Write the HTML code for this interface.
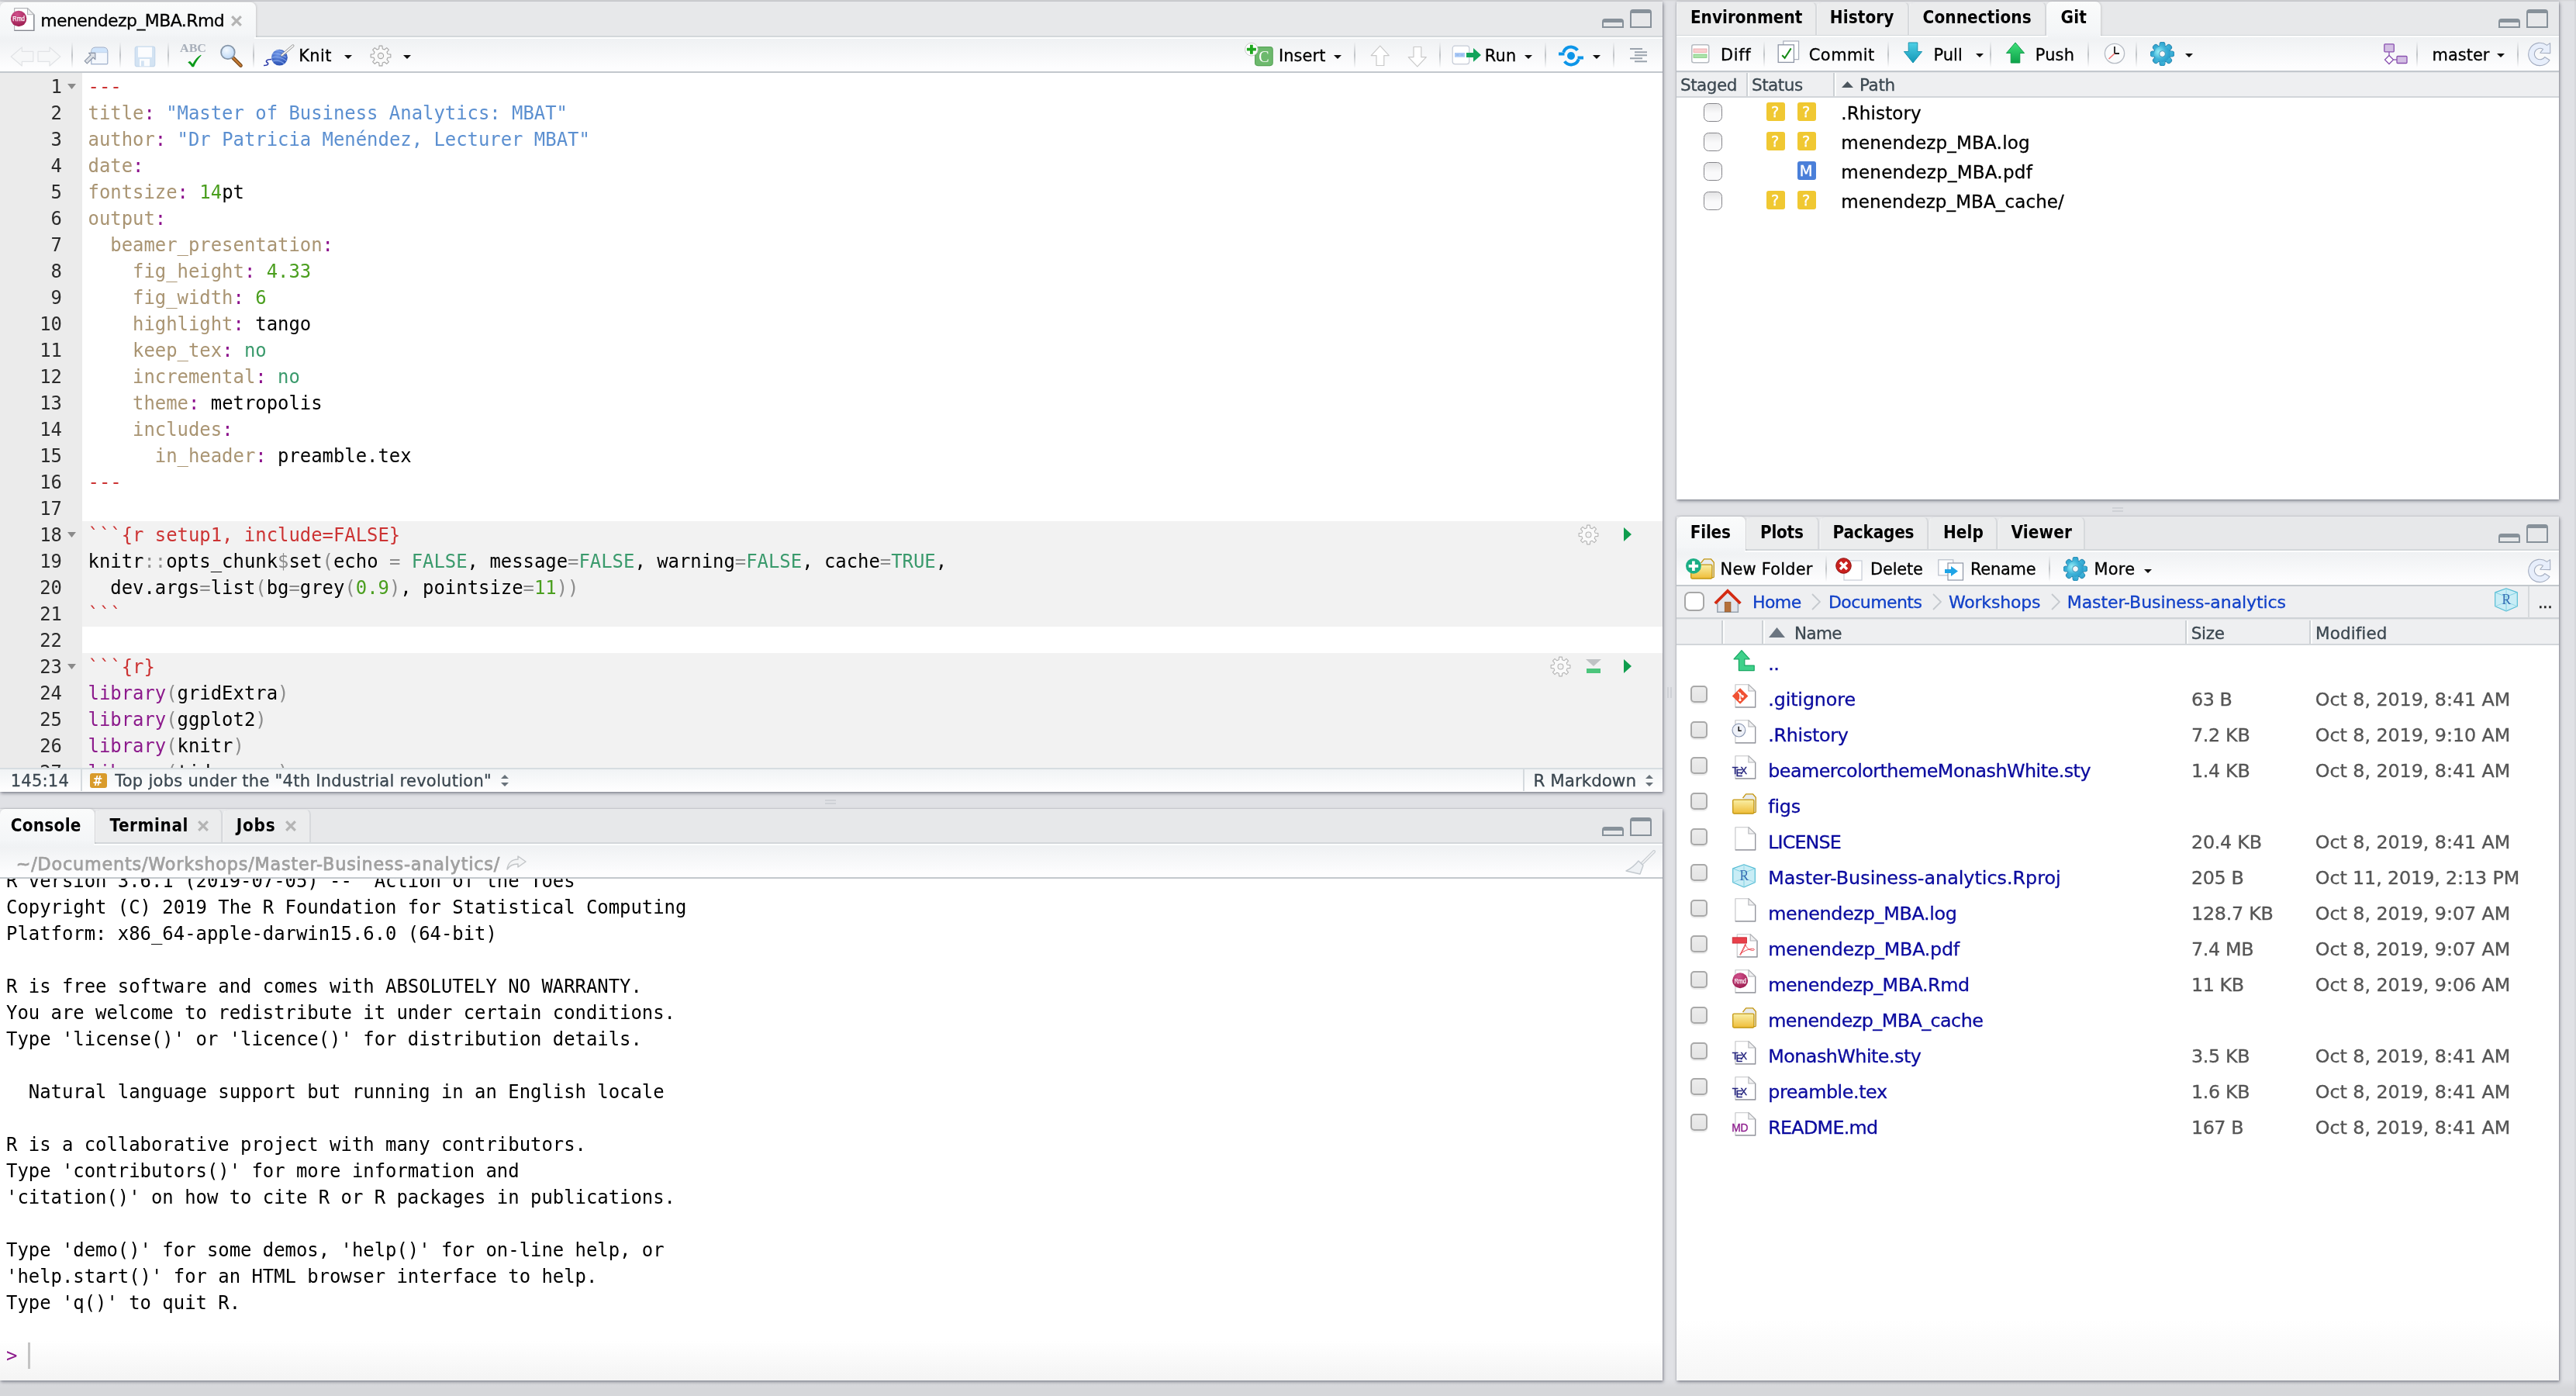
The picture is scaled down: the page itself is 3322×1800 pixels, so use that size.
<!DOCTYPE html>
<html lang="en"><head><meta charset="utf-8"><title>RStudio</title>
<style>
html,body{margin:0;padding:0}
body{width:3322px;height:1800px;overflow:hidden;background:linear-gradient(#e0e1e5 0,#e0e1e5 1778px,#d6d7da 1790px);position:relative;font-family:"DejaVu Sans","Liberation Sans",sans-serif;font-size:22.5px;color:#000}
div,span.t,svg{position:absolute;box-sizing:border-box}
span.t{white-space:pre;line-height:30px;-webkit-text-stroke:.3px}
span.b{font-family:"DejaVu Sans Condensed","DejaVu Sans","Liberation Sans",sans-serif;font-weight:bold;-webkit-text-stroke:0}
span.m{font-family:"DejaVu Sans Mono","Liberation Mono",monospace}
.mono{font-family:"DejaVu Sans Mono","Liberation Mono",monospace;font-size:23.9px;line-height:34px;white-space:pre}
.pane{background:#fff;box-shadow:1px 2px 4px 0 rgba(45,50,65,.5),0 0 2px rgba(45,50,65,.25)}
.tabbar{background:#e7e8ea;border-bottom:2px solid #d3d7da}
.tab{background:#ebeced;border-right:2px solid #d7d9dc;border-left:1px solid #f1f2f3;border-top:1px solid #e2e3e6;border-radius:7px 7px 0 0}
.tab.on{background:linear-gradient(#fafbfb,#f3f5f7);border:0;box-shadow:1px 0 3px rgba(0,0,0,.13)}
.tbar{background:linear-gradient(#eff1f3,#fdfdfe 88%);border-top:2px solid #fcfdfd;border-bottom:2px solid #c3c8cd}
.sep{width:2px;background:linear-gradient(rgba(150,155,160,0),rgba(150,155,160,.55) 50%,rgba(150,155,160,0))}
.hdr{background:#eeeff1;border-bottom:2px solid #d2d6da;border-top:1px solid #e4e6e8}
.colsep{width:4px;background:linear-gradient(90deg,#cdd1d5 0,#cdd1d5 45%,#fbfcfc 55%)}
.cb{border:1.4px solid #86868b;border-radius:6.500px;background:linear-gradient(#e4e4e5,#fafafb 55%)}
.cb2{border:2px solid #a9a9a9;border-radius:5px;background:linear-gradient(#ececec,#e4e4e4);box-shadow:0 2px 1px rgba(0,0,0,.08)}
.gut{background:#ebebeb}
.chunk{background:#f2f2f2}
.ln{color:#2b2b2b;text-align:right}
.r{color:#cc3333}.k{color:#a99472}.p{color:#8b0f8b}.s{color:#5b8fd0}.n{color:#4a9e1e}.c{color:#3a9a6c}.g{color:#8c8c8c}.kw{color:#8c1a8c}
.st{background:#efc135;border-radius:3px;color:#fff}

</style></head><body>
<div id="app" style="left:0;top:0;width:3322px;height:1800px;will-change:transform">
<div style="left:0px;top:0px;width:3322px;height:2px;background:linear-gradient(#d2d3d6,#dedfe2)"></div>
<div style="left:3319px;top:0px;width:3px;height:1800px;background:linear-gradient(90deg,rgba(0,0,0,0),rgba(0,0,0,.05))"></div>
<div class="pane" style="left:0;top:2px;width:2144px;height:1019px"></div>
<div class="tabbar" style="left:0;top:2px;width:2144px;height:46px"></div>
<div class="tab on" style="left:0;top:3px;width:330px;height:46px"></div>
<div class="tbar" style="left:0;top:48px;width:2144px;height:46px"></div>
<div style="left:0px;top:44px;width:328px;height:8px;background:linear-gradient(#f3f5f7,#f0f2f4)"></div>
<div style="left:0px;top:94px;width:106px;height:896px;background:#ebebeb"></div>
<div style="left:106px;top:672px;width:2038px;height:136px;background:#f2f2f2"></div>
<div style="left:106px;top:842px;width:2038px;height:148px;background:#f2f2f2"></div>
<div style="left:0;top:990px;width:2144px;height:31px;background:linear-gradient(#f1f3f5,#fff);border-top:2px solid #d6dde1"></div>
<div class="pane" style="left:0;top:1043px;width:2144px;height:737px"></div>
<div class="tabbar" style="left:0;top:1043px;width:2144px;height:45px"></div>
<div class="tab on" style="left:0;top:1043px;width:122px;height:46px"></div>
<div class="tab" style="left:123px;top:1043px;width:164px;height:43px"></div>
<div class="tab" style="left:288px;top:1043px;width:113px;height:43px"></div>
<div class="tbar" style="left:0;top:1088px;width:2144px;height:45px"></div>
<div style="left:0px;top:1084px;width:121px;height:8px;background:linear-gradient(#f3f5f7,#f0f2f4)"></div>
<div class="pane" style="left:2162px;top:2px;width:1138px;height:642px"></div>
<div class="tabbar" style="left:2162px;top:2px;width:1138px;height:45px"></div>
<div class="tab" style="left:2162px;top:2px;width:181px;height:43px"></div>
<div class="tab" style="left:2343px;top:2px;width:119px;height:43px"></div>
<div class="tab" style="left:2462px;top:2px;width:177px;height:43px"></div>
<div class="tab on" style="left:2639px;top:2px;width:70px;height:46px"></div>
<div class="tbar" style="left:2162px;top:46px;width:1138px;height:46.500px"></div>
<div style="left:2641px;top:43px;width:67px;height:8px;background:linear-gradient(#f3f5f7,#f0f2f4)"></div>
<div class="hdr" style="left:2162px;top:92.500px;width:1138px;height:33.500px"></div>
<div class="pane" style="left:2162px;top:666px;width:1138px;height:1114px;background:linear-gradient(#fff 93%,#f6f6f6)"></div>
<div class="tabbar" style="left:2162px;top:666px;width:1138px;height:44px"></div>
<div class="tab on" style="left:2162px;top:666px;width:89px;height:46px"></div>
<div class="tab" style="left:2252px;top:666px;width:94px;height:42px"></div>
<div class="tab" style="left:2347px;top:666px;width:140px;height:42px"></div>
<div class="tab" style="left:2488px;top:666px;width:88px;height:42px"></div>
<div class="tab" style="left:2577px;top:666px;width:112px;height:42px"></div>
<div class="tbar" style="left:2162px;top:710px;width:1138px;height:46px"></div>
<div style="left:2162px;top:706px;width:88px;height:8px;background:linear-gradient(#f3f5f7,#f0f2f4)"></div>
<div style="left:2162px;top:756px;width:1138px;height:42px;background:#eeeff1;border-bottom:2px solid #cfd3d7"></div>
<div class="hdr" style="left:2162px;top:798px;width:1138px;height:34px"></div>
<span class="t" style="left:52.2px;top:12px;font-size:22px;letter-spacing:-0.577px;">menendezp_MBA.Rmd</span>
<svg style="left:298px;top:19.5px" width="14" height="14" viewBox="0 0 14 14"><path d="M1.200 1.200L12.800 12.800M12.800 1.200L1.200 12.800" stroke="#b4b4b4" stroke-width="3.200"/></svg>
<svg style="left:12px;top:8px" width="34" height="34" viewBox="0 0 34 34"><path d="M6.600 2.600H23.500L31.800 10.800V31.400H6.600Z" fill="#fff" stroke="#b5b6ba" stroke-width="1.200" stroke-linejoin="round"/><path d="M31.800 10.800V31.400H6.600" fill="none" stroke="#84878f" stroke-width="1.300"/><path d="M23.500 2.600V10.800H31.800Z" fill="#f1f1f2" stroke="#b1b3b7" stroke-width="1.100" stroke-linejoin="round"/><circle cx="12.100" cy="16" r="10.200" fill="url(#grm)"/><text x="4.300" y="19.300" font-family="Liberation Sans,sans-serif" font-size="9.500" fill="#fff" stroke="#fff" stroke-width=".25" textLength="15.600" lengthAdjust="spacingAndGlyphs">Rmd</text></svg>
<div style="left:2066px;top:24.4px;width:28px;height:11.6px;border:2px solid #87919a;border-top-width:5.4px;border-radius:4px 4px 0 0"></div>
<div style="left:2102px;top:12px;width:28px;height:24px;border:2px solid #87919a;border-top-width:5.8px;border-radius:4px 4px 0 0"></div>
<div class="sep" style="left:92px;top:54px;height:34px"></div>
<div class="sep" style="left:154px;top:54px;height:34px"></div>
<div class="sep" style="left:216px;top:54px;height:34px"></div>
<div class="sep" style="left:326px;top:54px;height:34px"></div>
<div class="sep" style="left:1746px;top:54px;height:34px"></div>
<div class="sep" style="left:1856px;top:54px;height:34px"></div>
<div class="sep" style="left:1992px;top:54px;height:34px"></div>
<div class="sep" style="left:2080px;top:54px;height:34px"></div>
<span class="t" style="left:385.3px;top:57px;font-size:20.9px;letter-spacing:0.366px;">Knit</span>
<span class="t" style="left:1649.0px;top:57px;font-size:20.9px;letter-spacing:0.08px;">Insert</span>
<span class="t" style="left:1914.8px;top:57px;font-size:20.9px;letter-spacing:0.146px;">Run</span>
<svg style="left:444px;top:71px" width="10" height="5" viewBox="0 0 10 5"><path d="M0 0H10L5.0 5Z" fill="#111"/></svg>
<svg style="left:520px;top:71px" width="10" height="5" viewBox="0 0 10 5"><path d="M0 0H10L5.0 5Z" fill="#111"/></svg>
<svg style="left:1720px;top:71px" width="10" height="5" viewBox="0 0 10 5"><path d="M0 0H10L5.0 5Z" fill="#111"/></svg>
<svg style="left:1966px;top:71px" width="10" height="5" viewBox="0 0 10 5"><path d="M0 0H10L5.0 5Z" fill="#111"/></svg>
<svg style="left:2054px;top:71px" width="10" height="5" viewBox="0 0 10 5"><path d="M0 0H10L5.0 5Z" fill="#111"/></svg>
<div style="left:0;top:95px;width:2144px;height:895px;overflow:hidden">
<div class="mono ln" style="left:0;top:0px;width:80px;height:34px">1</div>
<div class="mono" style="left:113.500px;top:0px;height:34px"><span class="r">---</span></div>
<div class="mono ln" style="left:0;top:34px;width:80px;height:34px">2</div>
<div class="mono" style="left:113.500px;top:34px;height:34px"><span class="k">title</span><span class="p">:</span> <span class="s">"Master of Business Analytics: MBAT"</span></div>
<div class="mono ln" style="left:0;top:68px;width:80px;height:34px">3</div>
<div class="mono" style="left:113.500px;top:68px;height:34px"><span class="k">author</span><span class="p">:</span> <span class="s">"Dr Patricia Menéndez, Lecturer MBAT"</span></div>
<div class="mono ln" style="left:0;top:102px;width:80px;height:34px">4</div>
<div class="mono" style="left:113.500px;top:102px;height:34px"><span class="k">date</span><span class="p">:</span></div>
<div class="mono ln" style="left:0;top:136px;width:80px;height:34px">5</div>
<div class="mono" style="left:113.500px;top:136px;height:34px"><span class="k">fontsize</span><span class="p">:</span> <span class="n">14</span>pt</div>
<div class="mono ln" style="left:0;top:170px;width:80px;height:34px">6</div>
<div class="mono" style="left:113.500px;top:170px;height:34px"><span class="k">output</span><span class="p">:</span></div>
<div class="mono ln" style="left:0;top:204px;width:80px;height:34px">7</div>
<div class="mono" style="left:113.500px;top:204px;height:34px">  <span class="k">beamer_presentation</span><span class="p">:</span></div>
<div class="mono ln" style="left:0;top:238px;width:80px;height:34px">8</div>
<div class="mono" style="left:113.500px;top:238px;height:34px">    <span class="k">fig_height</span><span class="p">:</span> <span class="n">4.33</span></div>
<div class="mono ln" style="left:0;top:272px;width:80px;height:34px">9</div>
<div class="mono" style="left:113.500px;top:272px;height:34px">    <span class="k">fig_width</span><span class="p">:</span> <span class="n">6</span></div>
<div class="mono ln" style="left:0;top:306px;width:80px;height:34px">10</div>
<div class="mono" style="left:113.500px;top:306px;height:34px">    <span class="k">highlight</span><span class="p">:</span> tango</div>
<div class="mono ln" style="left:0;top:340px;width:80px;height:34px">11</div>
<div class="mono" style="left:113.500px;top:340px;height:34px">    <span class="k">keep_tex</span><span class="p">:</span> <span class="c">no</span></div>
<div class="mono ln" style="left:0;top:374px;width:80px;height:34px">12</div>
<div class="mono" style="left:113.500px;top:374px;height:34px">    <span class="k">incremental</span><span class="p">:</span> <span class="c">no</span></div>
<div class="mono ln" style="left:0;top:408px;width:80px;height:34px">13</div>
<div class="mono" style="left:113.500px;top:408px;height:34px">    <span class="k">theme</span><span class="p">:</span> metropolis</div>
<div class="mono ln" style="left:0;top:442px;width:80px;height:34px">14</div>
<div class="mono" style="left:113.500px;top:442px;height:34px">    <span class="k">includes</span><span class="p">:</span></div>
<div class="mono ln" style="left:0;top:476px;width:80px;height:34px">15</div>
<div class="mono" style="left:113.500px;top:476px;height:34px">      <span class="k">in_header</span><span class="p">:</span> preamble.tex</div>
<div class="mono ln" style="left:0;top:510px;width:80px;height:34px">16</div>
<div class="mono" style="left:113.500px;top:510px;height:34px"><span class="r">---</span></div>
<div class="mono ln" style="left:0;top:544px;width:80px;height:34px">17</div>
<div class="mono" style="left:113.500px;top:544px;height:34px"></div>
<div class="mono ln" style="left:0;top:578px;width:80px;height:34px">18</div>
<div class="mono" style="left:113.500px;top:578px;height:34px"><span class="r">```{r setup1, include=FALSE}</span></div>
<div class="mono ln" style="left:0;top:612px;width:80px;height:34px">19</div>
<div class="mono" style="left:113.500px;top:612px;height:34px">knitr<span class="g">::</span>opts_chunk<span class="g">$</span>set<span class="g">(</span>echo <span class="g">=</span> <span class="c">FALSE</span>, message<span class="g">=</span><span class="c">FALSE</span>, warning<span class="g">=</span><span class="c">FALSE</span>, cache<span class="g">=</span><span class="c">TRUE</span>,</div>
<div class="mono ln" style="left:0;top:646px;width:80px;height:34px">20</div>
<div class="mono" style="left:113.500px;top:646px;height:34px">  dev.args<span class="g">=</span>list<span class="g">(</span>bg<span class="g">=</span>grey<span class="g">(</span><span class="n">0.9</span><span class="g">)</span>, pointsize<span class="g">=</span><span class="n">11</span><span class="g">))</span></div>
<div class="mono ln" style="left:0;top:680px;width:80px;height:34px">21</div>
<div class="mono" style="left:113.500px;top:680px;height:34px"><span class="r">```</span></div>
<div class="mono ln" style="left:0;top:714px;width:80px;height:34px">22</div>
<div class="mono" style="left:113.500px;top:714px;height:34px"></div>
<div class="mono ln" style="left:0;top:748px;width:80px;height:34px">23</div>
<div class="mono" style="left:113.500px;top:748px;height:34px"><span class="r">```{r}</span></div>
<div class="mono ln" style="left:0;top:782px;width:80px;height:34px">24</div>
<div class="mono" style="left:113.500px;top:782px;height:34px"><span class="kw">library</span><span class="g">(</span>gridExtra<span class="g">)</span></div>
<div class="mono ln" style="left:0;top:816px;width:80px;height:34px">25</div>
<div class="mono" style="left:113.500px;top:816px;height:34px"><span class="kw">library</span><span class="g">(</span>ggplot2<span class="g">)</span></div>
<div class="mono ln" style="left:0;top:850px;width:80px;height:34px">26</div>
<div class="mono" style="left:113.500px;top:850px;height:34px"><span class="kw">library</span><span class="g">(</span>knitr<span class="g">)</span></div>
<div class="mono ln" style="left:0;top:884px;width:80px;height:34px">27</div>
<div class="mono" style="left:113.500px;top:884px;height:34px"><span class="kw">library</span><span class="g">(</span>tidyverse<span class="g">)</span></div>
<svg style="left:87px;top:13px" width="11" height="7" viewBox="0 0 11 7"><path d="M0 0H11L5.5 7Z" fill="#8a8a8a"/></svg>
<svg style="left:87px;top:591px" width="11" height="7" viewBox="0 0 11 7"><path d="M0 0H11L5.5 7Z" fill="#8a8a8a"/></svg>
<svg style="left:87px;top:761px" width="11" height="7" viewBox="0 0 11 7"><path d="M0 0H11L5.5 7Z" fill="#8a8a8a"/></svg>
</div>
<svg style="left:2035.1px;top:675.5px" width="27" height="27" viewBox="0 0 28 28"><path d="M11.75 4.98L12.08 1.14L15.92 1.14L16.25 4.98L18.79 6.03L21.73 3.55L24.45 6.27L21.97 9.21L23.02 11.75L26.86 12.08L26.86 15.92L23.02 16.25L21.97 18.79L24.45 21.73L21.73 24.45L18.79 21.97L16.25 23.02L15.92 26.86L12.08 26.86L11.75 23.02L9.21 21.97L6.27 24.45L3.55 21.73L6.03 18.79L4.98 16.25L1.14 15.92L1.14 12.08L4.98 11.75L6.03 9.21L3.55 6.27L6.27 3.55L9.21 6.03Z" fill="#fafafa" stroke="#b3b3b3" stroke-width="1.100" stroke-linejoin="round"/><circle cx="14" cy="14" r="3.600" fill="#f4f4f4" stroke="#b3b3b3" stroke-width="1.100"/></svg>
<svg style="left:2094px;top:680px" width="10" height="18" viewBox="0 0 10 18"><path d="M0 0L10 9L0 18Z" fill="#0f9d4d"/></svg>
<svg style="left:1999.2px;top:845.5px" width="27" height="27" viewBox="0 0 28 28"><path d="M11.75 4.98L12.08 1.14L15.92 1.14L16.25 4.98L18.79 6.03L21.73 3.55L24.45 6.27L21.97 9.21L23.02 11.75L26.86 12.08L26.86 15.92L23.02 16.25L21.97 18.79L24.45 21.73L21.73 24.45L18.79 21.97L16.25 23.02L15.92 26.86L12.08 26.86L11.75 23.02L9.21 21.97L6.27 24.45L3.55 21.73L6.03 18.79L4.98 16.25L1.14 15.92L1.14 12.08L4.98 11.75L6.03 9.21L3.55 6.27L6.27 3.55L9.21 6.03Z" fill="#fafafa" stroke="#b3b3b3" stroke-width="1.100" stroke-linejoin="round"/><circle cx="14" cy="14" r="3.600" fill="#f4f4f4" stroke="#b3b3b3" stroke-width="1.100"/></svg>
<svg style="left:2094px;top:850px" width="10" height="18" viewBox="0 0 10 18"><path d="M0 0L10 9L0 18Z" fill="#0f9d4d"/></svg>
<svg style="left:2045px;top:850px" width="20" height="18" viewBox="0 0 20 18"><path d="M0 0H20L10 9Z" fill="#bfc2c4"/><rect x="1" y="12" width="18" height="6" fill="#4cc57c"/></svg>
<span class="t" style="left:13.7px;top:992px;font-size:21px;color:#3b4750;letter-spacing:0.235px;">145:14</span>
<div style="left:104px;top:992px;width:2px;height:28px;background:#d5dade"></div>
<div style="left:116px;top:997px;width:22px;height:19px;background:#d99b2b;border-radius:3px"></div>
<span class="t b" style="left:119.5px;top:992px;font-size:17px;color:#fff;letter-spacing:-0.612px;">#</span>
<span class="t" style="left:148.2px;top:992px;font-size:21px;color:#3b4750;letter-spacing:0.281px;">Top jobs under the "4th Industrial revolution"</span>
<svg style="left:646px;top:999px" width="10" height="15" viewBox="0 0 10 15"><path d="M0 5L5 0L10 5ZM0 10L5 15L10 10Z" fill="#69737b"/></svg>
<div style="left:1964px;top:992px;width:2px;height:28px;background:#d5dade"></div>
<span class="t" style="left:1977.6px;top:992px;font-size:21.5px;color:#3b4750;letter-spacing:-0.041px;">R Markdown</span>
<svg style="left:2122px;top:999px" width="10" height="15" viewBox="0 0 10 15"><path d="M0 5L5 0L10 5ZM0 10L5 15L10 10Z" fill="#69737b"/></svg>
<svg style="left:13px;top:60px" width="66" height="26" viewBox="0 0 66 26"><path d="M1.200 13L15.300 1V6.300H29.800V19.400H15.300V25Z" fill="#f6f7f8" stroke="#e1e3e6" stroke-width="1.2" stroke-linejoin="round"/><path d="M64.800 13L51 1V6.300H36V19.400H51V25Z" fill="#f6f7f8" stroke="#e1e3e6" stroke-width="1.2" stroke-linejoin="round"/></svg>
<svg style="left:108px;top:60px" width="32" height="24" viewBox="0 0 32 24"><path d="M9.800 22.600V6.500C9.800 3.500 12 1.200 15 1.200H25.500C28.500 1.200 30.800 3.500 30.800 6.500V21.500Q30.800 22.600 29.700 22.600Z" fill="#f5f8fd" stroke="#9fb0cb" stroke-width="1.2"/><path d="M10.400 7.400V6.500C10.400 3.800 12.300 1.800 15 1.800H25.500C28.200 1.800 30.200 3.800 30.200 6.500V7.400Z" fill="#cfe4fb"/><path d="M10.400 7.700H30.200" stroke="#b7cbe6" stroke-width=".8"/><path d="M6.500 8.400H14.800V16.700L12.100 14L4.300 21.800L1.200 18.700L9 10.900Z" fill="#dde1e7" stroke="#8a94a6" stroke-width="1.200" stroke-linejoin="round"/></svg>
<svg style="left:173px;top:59px" width="28" height="28" viewBox="0 0 28 28"><rect x="1.200" y="1.200" width="25.500" height="25.500" rx="2.500" fill="#d3e3f3" stroke="#c5d8ec" stroke-width="1.2"/><rect x="5" y="1.800" width="18" height="13" fill="#fbfcfe"/><rect x="7" y="17" width="13" height="9.400" fill="#fbfcfe"/><rect x="9" y="19.400" width="3.800" height="7" fill="#d3e3f3"/></svg>
<svg style="left:230px;top:54px" width="40" height="34" viewBox="0 0 40 34"><text x="2" y="13.400" font-family="Liberation Serif,serif" font-weight="bold" font-size="14.800" fill="#a8afba" textLength="34" lengthAdjust="spacingAndGlyphs">ABC</text><path d="M12.200 26.200L15 24.800L18.500 28.500C21 23.500 24.500 19.500 29 16.800L29.600 17.600C25.500 21.500 22.500 26.500 20 32.300H17.600C16.200 30 14.500 28 12.200 26.200Z" fill="#0b9a1a"/></svg>
<svg style="left:282px;top:56px" width="32" height="32" viewBox="0 0 32 32"><defs><radialGradient id="gm" cx=".4" cy=".35" r=".7"><stop offset="0" stop-color="#f4f9ff"/><stop offset="1" stop-color="#b9d6f6"/></radialGradient></defs><path d="M18.500 18.500L28.500 28.500" stroke="#7a4a1c" stroke-width="4.600" stroke-linecap="round"/><path d="M18.500 18.500L28.500 28.500" stroke="#c77b35" stroke-width="2.400" stroke-linecap="round"/><circle cx="11.900" cy="11.400" r="8.800" fill="url(#gm)" stroke="#8595a8" stroke-width="1.800"/></svg>
<svg style="left:338px;top:56px" width="42" height="32" viewBox="0 0 42 32"><defs><radialGradient id="gk" cx=".4" cy=".3" r=".8"><stop offset="0" stop-color="#6f95e6"/><stop offset="1" stop-color="#2148ad"/></radialGradient></defs><path d="M2 28.500C8 28.500 9 26 6.500 24.500C4 23 5.500 20.500 12 20.500" fill="none" stroke="#2b3aa8" stroke-width="1.500"/><circle cx="22.400" cy="18.200" r="10.400" fill="url(#gk)"/><path d="M13 14C17 12 24 13 31 18M12.300 18.500C18 16 26 18 32 23M13.500 23C19 21 25 23 29 26.500M17 9.500C21 9 27 11 31 14" fill="none" stroke="#8fb0f0" stroke-width="1.100" opacity=".8"/><path d="M39.800 3L25.500 15.200" stroke="#8b8b8b" stroke-width="3.200" stroke-linecap="round"/><path d="M39.800 3L25.500 15.200" stroke="#fafafa" stroke-width="1.700" stroke-linecap="round"/></svg>
<svg style="left:476.500px;top:57.500px" width="28" height="28" viewBox="0 0 28 28"><path d="M11.75 4.98L12.08 1.14L15.92 1.14L16.25 4.98L18.79 6.03L21.73 3.55L24.45 6.27L21.97 9.21L23.02 11.75L26.86 12.08L26.86 15.92L23.02 16.25L21.97 18.79L24.45 21.73L21.73 24.45L18.79 21.97L16.25 23.02L15.92 26.86L12.08 26.86L11.75 23.02L9.21 21.97L6.27 24.45L3.55 21.73L6.03 18.79L4.98 16.25L1.14 15.92L1.14 12.08L4.98 11.75L6.03 9.21L3.55 6.27L6.27 3.55L9.21 6.03Z" fill="#fafafa" stroke="#a6a6a6" stroke-width="1.100" stroke-linejoin="round"/><circle cx="14" cy="14" r="3.600" fill="#f4f4f4" stroke="#a6a6a6" stroke-width="1.100"/></svg>
<svg style="left:1604px;top:54px" width="38" height="32" viewBox="0 0 38 32"><rect x="14.600" y="6.600" width="22.600" height="24" rx="3.500" fill="#6db96d" stroke="#5aa65a" stroke-width="1.200"/><text x="26" y="25.500" text-anchor="middle" font-family="Liberation Serif,serif" font-size="20" fill="#fff">C</text><circle cx="9.900" cy="9.700" r="8.300" fill="#fff" stroke="#c9c9c9" stroke-width="1"/><path d="M9.900 3.700V15.700M3.900 9.700H15.900" stroke="#1fa71f" stroke-width="3.800"/></svg>
<svg style="left:1767px;top:58px" width="26" height="28" viewBox="0 0 26 28"><path d="M12.800 1.200L24.300 13.600H17.800V26.500H8V13.600H1.200Z" fill="#fff" stroke="#c9c9c9" stroke-width="1.200" stroke-linejoin="round"/></svg>
<svg style="left:1815px;top:59px" width="26" height="28" viewBox="0 0 26 28"><path d="M12.800 26.800L24.300 14.600H17.800V1.500H8V14.600H1.200Z" fill="#fff" stroke="#c9c9c9" stroke-width="1.200" stroke-linejoin="round"/></svg>
<svg style="left:1872px;top:58px" width="40" height="26" viewBox="0 0 40 26"><rect x="1.200" y="1.200" width="21.500" height="23.400" rx="3" fill="#fff" stroke="#c5cbd6" stroke-width="1.200"/><rect x="4" y="10" width="13" height="5.700" fill="#a9c8f5"/><path d="M6 12.800H9.500M11.500 12.800H15" stroke="#8fb2e6" stroke-width="1.200"/><path d="M19 10H28V4L38 13L28 21.800V16H19Z" fill="#13a45b"/></svg>
<svg style="left:2008px;top:58px" width="36" height="28" viewBox="0 0 36 28"><circle cx="18" cy="14" r="5" fill="#0d95e8"/><path d="M8.200 9.400C10 4.800 14 2.600 18 2.600C21.500 2.600 24.500 4.200 26.300 6.800" fill="none" stroke="#0d95e8" stroke-width="4"/><path d="M27.800 18.600C26 23.200 22 25.400 18 25.400C14.500 25.400 11.500 23.800 9.700 21.200" fill="none" stroke="#0d95e8" stroke-width="4"/><path d="M2 11.500H9.500M26.500 16.500H34" stroke="#0d95e8" stroke-width="4"/></svg>
<svg style="left:2101px;top:61px" width="24" height="20" viewBox="0 0 24 20"><path d="M1 2H17M7 6.300H23M7 10.300H23M1 14.200H17M7 18.200H23" stroke="#9aa3ad" stroke-width="2"/></svg>
<span class="t b" style="left:13.7px;top:1049px;font-size:22.3px;letter-spacing:0.3px;">Console</span>
<span class="t b" style="left:141.6px;top:1049px;font-size:22.3px;letter-spacing:0.587px;">Terminal</span>
<span class="t b" style="left:304.7px;top:1049px;font-size:22.3px;letter-spacing:0.838px;">Jobs</span>
<svg style="left:254.5px;top:1058px" width="14" height="14" viewBox="0 0 14 14"><path d="M1.200 1.200L12.800 12.800M12.800 1.200L1.200 12.800" stroke="#b4b4b4" stroke-width="3.200"/></svg>
<svg style="left:368px;top:1058px" width="14" height="14" viewBox="0 0 14 14"><path d="M1.200 1.200L12.800 12.800M12.800 1.200L1.200 12.800" stroke="#b4b4b4" stroke-width="3.200"/></svg>
<div style="left:2066px;top:1066.4px;width:28px;height:11.6px;border:2px solid #87919a;border-top-width:5.4px;border-radius:4px 4px 0 0"></div>
<div style="left:2102px;top:1054px;width:28px;height:24px;border:2px solid #87919a;border-top-width:5.8px;border-radius:4px 4px 0 0"></div>
<span class="t" style="left:20.7px;top:1099px;font-size:22.3px;color:#a0a0a0;letter-spacing:0.809px;-webkit-text-stroke:.75px">~/Documents/Workshops/Master-Business-analytics/</span>
<svg style="left:653px;top:1103px" width="26" height="20" viewBox="0 0 26 20"><path d="M15 1L25 8L15 15V11C9 11 4 13 1 18C2 10 7 5 15 5Z" fill="#f4f5f6" stroke="#c3c6c9" stroke-width="1.5" stroke-linejoin="round"/></svg>
<svg style="left:2094px;top:1096px" width="42" height="34" viewBox="0 0 42 34"><path d="M39 2L24 17" stroke="#c9ced3" stroke-width="4" stroke-linecap="round"/><path d="M39 2L24 17" stroke="#f6f7f8" stroke-width="1.6" stroke-linecap="round"/><path d="M19 14L25 20L21 31L3 27C9 24 15 19 19 14Z" fill="#eef1f4" stroke="#c3c9cf" stroke-width="1.4" stroke-linejoin="round"/></svg>
<div style="left:0;top:1133px;width:2144px;height:647px;overflow:hidden;background:linear-gradient(#fff 92%,#f4f4f4)">
<div class="mono" style="left:8px;top:-14px;height:34px">R version 3.6.1 (2019-07-05) -- "Action of the Toes"</div>
<div class="mono" style="left:8px;top:20px;height:34px">Copyright (C) 2019 The R Foundation for Statistical Computing</div>
<div class="mono" style="left:8px;top:54px;height:34px">Platform: x86_64-apple-darwin15.6.0 (64-bit)</div>
<div class="mono" style="left:8px;top:88px;height:34px"></div>
<div class="mono" style="left:8px;top:122px;height:34px">R is free software and comes with ABSOLUTELY NO WARRANTY.</div>
<div class="mono" style="left:8px;top:156px;height:34px">You are welcome to redistribute it under certain conditions.</div>
<div class="mono" style="left:8px;top:190px;height:34px">Type 'license()' or 'licence()' for distribution details.</div>
<div class="mono" style="left:8px;top:224px;height:34px"></div>
<div class="mono" style="left:8px;top:258px;height:34px">  Natural language support but running in an English locale</div>
<div class="mono" style="left:8px;top:292px;height:34px"></div>
<div class="mono" style="left:8px;top:326px;height:34px">R is a collaborative project with many contributors.</div>
<div class="mono" style="left:8px;top:360px;height:34px">Type 'contributors()' for more information and</div>
<div class="mono" style="left:8px;top:394px;height:34px">'citation()' on how to cite R or R packages in publications.</div>
<div class="mono" style="left:8px;top:428px;height:34px"></div>
<div class="mono" style="left:8px;top:462px;height:34px">Type 'demo()' for some demos, 'help()' for on-line help, or</div>
<div class="mono" style="left:8px;top:496px;height:34px">'help.start()' for an HTML browser interface to help.</div>
<div class="mono" style="left:8px;top:530px;height:34px">Type 'q()' to quit R.</div>
<div class="mono" style="left:8px;top:564px;height:34px"></div>
<div class="mono" style="left:8px;top:598px;height:34px"><span class="kw">&gt;</span> </div>
<div style="left:36px;top:598px;width:3px;height:34px;background:#c4c4c4"></div>
</div>
<span class="t b" style="left:2179.9px;top:7px;font-size:22.3px;letter-spacing:0.018px;">Environment</span>
<span class="t b" style="left:2359.8px;top:7px;font-size:22.3px;letter-spacing:0.107px;">History</span>
<span class="t b" style="left:2479.6px;top:7px;font-size:22.3px;letter-spacing:0.096px;">Connections</span>
<span class="t b" style="left:2657.5px;top:7px;font-size:22.3px;letter-spacing:0.188px;">Git</span>
<div style="left:3222px;top:24.4px;width:28px;height:11.6px;border:2px solid #87919a;border-top-width:5.4px;border-radius:4px 4px 0 0"></div>
<div style="left:3258px;top:12px;width:28px;height:24px;border:2px solid #87919a;border-top-width:5.8px;border-radius:4px 4px 0 0"></div>
<div class="sep" style="left:2274px;top:53px;height:34px"></div>
<div class="sep" style="left:2434px;top:53px;height:34px"></div>
<div class="sep" style="left:2566px;top:53px;height:34px"></div>
<div class="sep" style="left:2692px;top:53px;height:34px"></div>
<div class="sep" style="left:2754px;top:53px;height:34px"></div>
<div class="sep" style="left:3116px;top:53px;height:34px"></div>
<div class="sep" style="left:3246px;top:53px;height:34px"></div>
<span class="t" style="left:2219.0px;top:56px;font-size:20.9px;letter-spacing:0.676px;">Diff</span>
<span class="t" style="left:2332.8px;top:56px;font-size:20.9px;letter-spacing:0.487px;">Commit</span>
<span class="t" style="left:2493.5px;top:56px;font-size:20.9px;letter-spacing:0.077px;">Pull</span>
<span class="t" style="left:2624.7px;top:56px;font-size:20.9px;letter-spacing:0.223px;">Push</span>
<span class="t" style="left:3136.6px;top:56px;font-size:20.9px;letter-spacing:0.038px;">master</span>
<svg style="left:2548px;top:69px" width="10" height="5" viewBox="0 0 10 5"><path d="M0 0H10L5.0 5Z" fill="#111"/></svg>
<svg style="left:2818px;top:69px" width="10" height="5" viewBox="0 0 10 5"><path d="M0 0H10L5.0 5Z" fill="#111"/></svg>
<svg style="left:3220px;top:69px" width="10" height="5" viewBox="0 0 10 5"><path d="M0 0H10L5.0 5Z" fill="#111"/></svg>
<svg style="left:2181px;top:57px" width="24" height="25" viewBox="0 0 24 25"><rect x=".75" y=".75" width="22" height="23" rx="2.5" fill="#fff" stroke="#b7bcc2" stroke-width="1.5"/><rect x="3" y="6" width="17" height="4.5" fill="#f9cfd0" stroke="#eaa3a5" stroke-width=".8"/><rect x="3" y="13" width="17" height="4.5" fill="#abe2aa" stroke="#7fcb7d" stroke-width=".8"/></svg>
<svg style="left:2292px;top:52px" width="29" height="30" viewBox="0 0 29 30"><rect x="7.800" y="1" width="19.800" height="23.600" fill="#fff" stroke="#a9aebb" stroke-width="1.200"/><rect x="1.200" y="5.800" width="20.200" height="22.600" fill="#fff" stroke="#8f96a6" stroke-width="1.300"/><path d="M6.200 19.200L9.600 22.800L17.700 10.400" fill="none" stroke="#168a16" stroke-width="2"/></svg>
<svg style="left:2454px;top:54px" width="26" height="28" viewBox="0 0 26 29"><defs><linearGradient id="gp" x1="0" y1="0" x2="0" y2="1"><stop offset="0" stop-color="#4fd0e6"/><stop offset="1" stop-color="#1397b6"/></linearGradient></defs><path d="M7 1H19V13H25L13 28L1 13H7Z" fill="url(#gp)" stroke="#1792ae" stroke-width="1"/></svg>
<svg style="left:2586px;top:54px" width="26" height="28" viewBox="0 0 26 29"><defs><linearGradient id="gu" x1="0" y1="0" x2="0" y2="1"><stop offset="0" stop-color="#3fe07a"/><stop offset="1" stop-color="#0da24a"/></linearGradient></defs><path d="M7 28H19V15H25L13 1L1 15H7Z" fill="url(#gu)" stroke="#0f9a48" stroke-width="1"/></svg>
<svg style="left:2713px;top:55px" width="28" height="28" viewBox="0 0 28 28"><circle cx="14" cy="14" r="12.6" fill="#fafbfc" stroke="#b9bec6" stroke-width="1.4"/><path d="M14 5V14H20" fill="none" stroke="#222" stroke-width="1.8"/><path d="M14 14L6.500 21" stroke="#f26d6d" stroke-width="1.5"/></svg>
<svg width="0" height="0" style="left:0;top:0"><defs><radialGradient id="gg" gradientUnits="userSpaceOnUse" cx="11" cy="13" r="16"><stop offset="0" stop-color="#9af0f8"/><stop offset=".55" stop-color="#3fb4d9"/><stop offset="1" stop-color="#2799c8"/></radialGradient></defs></svg>
<svg style="left:2773px;top:53.7px" width="31" height="31" viewBox="0 0 31 31"><g fill="#2b86ad" stroke="#2b86ad" stroke-width="1.500"><rect x="12.300" y=".5" width="6.400" height="11" rx="2.600" transform="rotate(0 15.500 15.500)"/><rect x="12.300" y=".5" width="6.400" height="11" rx="2.600" transform="rotate(45 15.500 15.500)"/><rect x="12.300" y=".5" width="6.400" height="11" rx="2.600" transform="rotate(90 15.500 15.500)"/><rect x="12.300" y=".5" width="6.400" height="11" rx="2.600" transform="rotate(135 15.500 15.500)"/><rect x="12.300" y=".5" width="6.400" height="11" rx="2.600" transform="rotate(180 15.500 15.500)"/><rect x="12.300" y=".5" width="6.400" height="11" rx="2.600" transform="rotate(225 15.500 15.500)"/><rect x="12.300" y=".5" width="6.400" height="11" rx="2.600" transform="rotate(270 15.500 15.500)"/><rect x="12.300" y=".5" width="6.400" height="11" rx="2.600" transform="rotate(315 15.500 15.500)"/><circle cx="15.500" cy="15.500" r="10.400"/></g><g fill="url(#gg)"><rect x="12.300" y=".5" width="6.400" height="11" rx="2.600" transform="rotate(0 15.500 15.500)"/><rect x="12.300" y=".5" width="6.400" height="11" rx="2.600" transform="rotate(45 15.500 15.500)"/><rect x="12.300" y=".5" width="6.400" height="11" rx="2.600" transform="rotate(90 15.500 15.500)"/><rect x="12.300" y=".5" width="6.400" height="11" rx="2.600" transform="rotate(135 15.500 15.500)"/><rect x="12.300" y=".5" width="6.400" height="11" rx="2.600" transform="rotate(180 15.500 15.500)"/><rect x="12.300" y=".5" width="6.400" height="11" rx="2.600" transform="rotate(225 15.500 15.500)"/><rect x="12.300" y=".5" width="6.400" height="11" rx="2.600" transform="rotate(270 15.500 15.500)"/><rect x="12.300" y=".5" width="6.400" height="11" rx="2.600" transform="rotate(315 15.500 15.500)"/><circle cx="15.500" cy="15.500" r="10.400"/></g><circle cx="15.500" cy="15.500" r="3.900" fill="#f6f8fa" stroke="#2b86ad" stroke-width=".9"/></svg>
<svg style="left:3074px;top:56px" width="31" height="28" viewBox="0 0 31 28"><rect x=".8" y=".8" width="12.500" height="10" rx="1" fill="#d3bfe3" stroke="#8a52b0" stroke-width="1.3"/><path d="M7 11V16" stroke="#8a52b0" stroke-width="1.3"/><path d="M7 15.500L12.500 21L7 26.500L1.500 21Z" fill="#fff" stroke="#8a52b0" stroke-width="1.3"/><path d="M12.500 21H17" stroke="#8a52b0" stroke-width="1.3"/><rect x="17" y="16.500" width="13" height="9" rx="1" fill="#d3bfe3" stroke="#8a52b0" stroke-width="1.3"/></svg>
<svg style="left:3260px;top:53.5px" width="31" height="32" viewBox="0 0 31 32"><path d="M24.500 4.400A14.700 14.700 0 1 0 27.970 23.540L21.650 19.590A7.250 7.250 0 1 1 19.500 9.400L15.900 14.200L28.800 14.600L28.600 1.600Z" fill="#e7eefb" stroke="#a4adc0" stroke-width="1.100" stroke-linejoin="round"/></svg>
<span class="t" style="left:2167.0px;top:95px;font-size:21.5px;color:#3b4750;letter-spacing:-0.497px;">Staged</span>
<span class="t" style="left:2259.0px;top:95px;font-size:21.5px;color:#3b4750;letter-spacing:-0.486px;">Status</span>
<span class="t" style="left:2398.0px;top:95px;font-size:21.5px;color:#3b4750;letter-spacing:-0.384px;">Path</span>
<div class="colsep" style="left:2252px;top:94px;height:30px"></div>
<div class="colsep" style="left:2364px;top:94px;height:30px"></div>
<svg style="left:2375px;top:105px" width="15" height="8" viewBox="0 0 15 8"><path d="M0 8L7.500 0L15 8Z" fill="#4c565e"/></svg>
<div class="cb" style="left:2197px;top:133.1px;width:24px;height:24px"></div>
<div style="left:2278px;top:132.3px;width:24px;height:24px;background:#f0c832;border-radius:3px"></div>
<span class="t" style="left:2284.0px;top:130px;font-size:19.5px;color:#fff;letter-spacing:0px;">?</span>
<div style="left:2318px;top:132.3px;width:24px;height:24px;background:#f0c832;border-radius:3px"></div>
<span class="t" style="left:2324.0px;top:130px;font-size:19.5px;color:#fff;letter-spacing:0px;">?</span>
<span class="t" style="left:2374.3px;top:131px;font-size:23px;letter-spacing:0.122px;">.Rhistory</span>
<div class="cb" style="left:2197px;top:171.1px;width:24px;height:24px"></div>
<div style="left:2278px;top:170.3px;width:24px;height:24px;background:#f0c832;border-radius:3px"></div>
<span class="t" style="left:2284.0px;top:168px;font-size:19.5px;color:#fff;letter-spacing:0px;">?</span>
<div style="left:2318px;top:170.3px;width:24px;height:24px;background:#f0c832;border-radius:3px"></div>
<span class="t" style="left:2324.0px;top:168px;font-size:19.5px;color:#fff;letter-spacing:0px;">?</span>
<span class="t" style="left:2374.3px;top:169px;font-size:23px;letter-spacing:0.199px;">menendezp_MBA.log</span>
<div class="cb" style="left:2197px;top:209.1px;width:24px;height:24px"></div>
<div style="left:2318px;top:208.3px;width:24px;height:24px;background:#4a7fd9;border-radius:3px"></div>
<span class="t" style="left:2320.8px;top:206px;font-size:19.5px;color:#fff;letter-spacing:0px;">M</span>
<span class="t" style="left:2374.3px;top:207px;font-size:23px;letter-spacing:0.256px;">menendezp_MBA.pdf</span>
<div class="cb" style="left:2197px;top:247.1px;width:24px;height:24px"></div>
<div style="left:2278px;top:246.3px;width:24px;height:24px;background:#f0c832;border-radius:3px"></div>
<span class="t" style="left:2284.0px;top:244px;font-size:19.5px;color:#fff;letter-spacing:0px;">?</span>
<div style="left:2318px;top:246.3px;width:24px;height:24px;background:#f0c832;border-radius:3px"></div>
<span class="t" style="left:2324.0px;top:244px;font-size:19.5px;color:#fff;letter-spacing:0px;">?</span>
<span class="t" style="left:2374.3px;top:245px;font-size:23px;letter-spacing:0.109px;">menendezp_MBA_cache/</span>
<span class="t b" style="left:2179.8px;top:671px;font-size:22.3px;letter-spacing:-0.22px;">Files</span>
<span class="t b" style="left:2270.0px;top:671px;font-size:22.3px;letter-spacing:-0.258px;">Plots</span>
<span class="t b" style="left:2363.5px;top:671px;font-size:22.3px;letter-spacing:-0.177px;">Packages</span>
<span class="t b" style="left:2506.0px;top:671px;font-size:22.3px;letter-spacing:0.04px;">Help</span>
<span class="t b" style="left:2593.6px;top:671px;font-size:22.3px;letter-spacing:0.124px;">Viewer</span>
<div style="left:3222px;top:688.4px;width:28px;height:11.6px;border:2px solid #87919a;border-top-width:5.4px;border-radius:4px 4px 0 0"></div>
<div style="left:3258px;top:676px;width:28px;height:24px;border:2px solid #87919a;border-top-width:5.8px;border-radius:4px 4px 0 0"></div>
<div class="sep" style="left:2354px;top:716px;height:34px"></div>
<div class="sep" style="left:2642px;top:716px;height:34px"></div>
<span class="t" style="left:2218.6px;top:719px;font-size:20.9px;letter-spacing:0.233px;">New Folder</span>
<span class="t" style="left:2412.0px;top:719px;font-size:20.9px;letter-spacing:-0.14px;">Delete</span>
<span class="t" style="left:2540.9px;top:719px;font-size:20.9px;letter-spacing:-0.198px;">Rename</span>
<span class="t" style="left:2700.5px;top:719px;font-size:20.9px;letter-spacing:0.276px;">More</span>
<svg style="left:2765px;top:734px" width="10" height="5" viewBox="0 0 10 5"><path d="M0 0H10L5.0 5Z" fill="#111"/></svg>
<svg style="left:2661px;top:717.9px" width="31" height="31" viewBox="0 0 31 31"><g fill="#2b86ad" stroke="#2b86ad" stroke-width="1.500"><rect x="12.300" y=".5" width="6.400" height="11" rx="2.600" transform="rotate(0 15.500 15.500)"/><rect x="12.300" y=".5" width="6.400" height="11" rx="2.600" transform="rotate(45 15.500 15.500)"/><rect x="12.300" y=".5" width="6.400" height="11" rx="2.600" transform="rotate(90 15.500 15.500)"/><rect x="12.300" y=".5" width="6.400" height="11" rx="2.600" transform="rotate(135 15.500 15.500)"/><rect x="12.300" y=".5" width="6.400" height="11" rx="2.600" transform="rotate(180 15.500 15.500)"/><rect x="12.300" y=".5" width="6.400" height="11" rx="2.600" transform="rotate(225 15.500 15.500)"/><rect x="12.300" y=".5" width="6.400" height="11" rx="2.600" transform="rotate(270 15.500 15.500)"/><rect x="12.300" y=".5" width="6.400" height="11" rx="2.600" transform="rotate(315 15.500 15.500)"/><circle cx="15.500" cy="15.500" r="10.400"/></g><g fill="url(#gg)"><rect x="12.300" y=".5" width="6.400" height="11" rx="2.600" transform="rotate(0 15.500 15.500)"/><rect x="12.300" y=".5" width="6.400" height="11" rx="2.600" transform="rotate(45 15.500 15.500)"/><rect x="12.300" y=".5" width="6.400" height="11" rx="2.600" transform="rotate(90 15.500 15.500)"/><rect x="12.300" y=".5" width="6.400" height="11" rx="2.600" transform="rotate(135 15.500 15.500)"/><rect x="12.300" y=".5" width="6.400" height="11" rx="2.600" transform="rotate(180 15.500 15.500)"/><rect x="12.300" y=".5" width="6.400" height="11" rx="2.600" transform="rotate(225 15.500 15.500)"/><rect x="12.300" y=".5" width="6.400" height="11" rx="2.600" transform="rotate(270 15.500 15.500)"/><rect x="12.300" y=".5" width="6.400" height="11" rx="2.600" transform="rotate(315 15.500 15.500)"/><circle cx="15.500" cy="15.500" r="10.400"/></g><circle cx="15.500" cy="15.500" r="3.900" fill="#f6f8fa" stroke="#2b86ad" stroke-width=".9"/></svg>
<svg style="left:3260px;top:719.8px" width="31" height="32" viewBox="0 0 31 32"><path d="M24.500 4.400A14.700 14.700 0 1 0 27.970 23.540L21.650 19.590A7.250 7.250 0 1 1 19.500 9.400L15.900 14.200L28.800 14.600L28.600 1.600Z" fill="#e7eefb" stroke="#a4adc0" stroke-width="1.100" stroke-linejoin="round"/></svg>
<svg width="0" height="0" style="left:0;top:0"><defs><linearGradient id="gf" x1="0" y1="0" x2="0" y2="1"><stop offset="0" stop-color="#f9efa6"/><stop offset="1" stop-color="#efbd38"/></linearGradient></defs></svg>
<svg style="left:2180px;top:720.3px" width="31" height="27.0" viewBox="0 0 31 27"><path d="M13.500 6L17.600 .8H26.400L30.300 5.200V23.600Q30.300 24.600 29.300 24.600H26" fill="#e9ebec" stroke="#c4960f" stroke-width="1.300" stroke-linejoin="round"/><rect x=".7" y="8.200" width="27.200" height="17.800" rx="1.400" fill="url(#gf)" stroke="#c4960f" stroke-width="1.300"/></svg>
<svg style="left:2173px;top:719px" width="22" height="22" viewBox="0 0 22 22"><circle cx="10.900" cy="10.800" r="9.900" fill="#1aae85"/><path d="M10.900 4.600V17M4.700 10.800H17.100" stroke="#fff" stroke-width="3.700"/></svg>
<svg style="left:2367px;top:719px" width="36" height="30" viewBox="0 0 36 30"><rect x="11" y="4" width="23" height="25" fill="#fff" stroke="#c7ccd6" stroke-width="1.2"/><circle cx="10.500" cy="10.500" r="9.800" fill="#c9201e" stroke="#8e1210" stroke-width="1"/><path d="M6 6L15 15M15 6L6 15" stroke="#fff" stroke-width="3.400"/></svg>
<svg style="left:2499px;top:721px" width="34" height="28" viewBox="0 0 34 28"><rect x=".8" y=".8" width="19" height="20" fill="#fff" stroke="#b9bfca" stroke-width="1.2"/><rect x="13" y="5" width="19.500" height="22" fill="#fff" stroke="#8d95a6" stroke-width="1.2"/><path d="M9 13H17V9L26 15.500L17 22V18H9Z" fill="#1fa4e6"/></svg>
<div class="cb" style="left:2172px;top:762.500px;width:26px;height:25.500px;border:2px solid #a7a7a7;background:#fff;border-radius:7px"></div>
<svg style="left:2210px;top:759px" width="36" height="33" viewBox="0 0 36 33"><path d="M4.800 15.500V30.200H31.400V15.500L18 3.500Z" fill="#e1e5ec" stroke="#98a3ae" stroke-width="1.500"/><rect x="14.300" y="17.300" width="7.600" height="12.500" fill="#b5703a" stroke="#935627" stroke-width=".8"/><path d="M1.800 19L18 3L34.400 19" fill="none" stroke="#d42a12" stroke-width="3.800" stroke-linejoin="miter"/></svg>
<span class="t" style="left:2260.0px;top:762px;font-size:22px;color:#1140c8;letter-spacing:-0.592px;">Home</span>
<span class="t" style="left:2358.0px;top:762px;font-size:22px;color:#1140c8;letter-spacing:-0.571px;">Documents</span>
<span class="t" style="left:2513.0px;top:762px;font-size:22px;color:#1140c8;letter-spacing:-0.202px;">Workshops</span>
<span class="t" style="left:2665.8px;top:762px;font-size:22px;color:#1140c8;letter-spacing:-0.079px;">Master-Business-analytics</span>
<svg style="left:2336px;top:765px" width="12" height="22" viewBox="0 0 12 22"><path d="M1 1L11 11L1 21" fill="none" stroke="#c5c9ce" stroke-width="1.8"/></svg>
<svg style="left:2492px;top:765px" width="12" height="22" viewBox="0 0 12 22"><path d="M1 1L11 11L1 21" fill="none" stroke="#c5c9ce" stroke-width="1.8"/></svg>
<svg style="left:2645px;top:765px" width="12" height="22" viewBox="0 0 12 22"><path d="M1 1L11 11L1 21" fill="none" stroke="#c5c9ce" stroke-width="1.8"/></svg>
<div style="left:3260px;top:756px;width:2px;height:41px;background:#d6d9dc"></div>
<span class="t" style="left:3272.8px;top:762px;font-size:22px;color:#222;letter-spacing:-0.928px;">...</span>
<svg style="left:3217px;top:758px" width="30" height="30.6" viewBox="0 0 30.400 31"><path d="M15.200 .7L29.700 6V24L15.200 30.400L.7 24V6Z" fill="#c9edf6" stroke="#55bcd4" stroke-width="1.200" stroke-linejoin="round"/><path d="M.7 6L15.200 11.500L29.700 6M15.200 11.500V30.400" fill="none" stroke="#7fd0e3" stroke-width="1"/><path d="M.7 24L15.200 18.500L29.700 24M15.200 .7V18.500" fill="none" stroke="#8fd6e6" stroke-width=".9"/><text x="9.600" y="21.300" font-family="Liberation Serif,serif" font-size="19" fill="#336cb3" textLength="11.800" lengthAdjust="spacingAndGlyphs">R</text></svg>
<span class="t" style="left:2314.0px;top:802px;font-size:21.5px;color:#3b4750;letter-spacing:-0.609px;">Name</span>
<span class="t" style="left:2825.7px;top:802px;font-size:21.5px;color:#3b4750;letter-spacing:-0.31px;">Size</span>
<span class="t" style="left:2986.0px;top:802px;font-size:21.5px;color:#3b4750;letter-spacing:0.094px;">Modified</span>
<div class="colsep" style="left:2220px;top:800px;height:30px"></div>
<div class="colsep" style="left:2272px;top:800px;height:30px"></div>
<div class="colsep" style="left:2818px;top:800px;height:30px"></div>
<div class="colsep" style="left:2978px;top:800px;height:30px"></div>
<svg style="left:2281px;top:809px" width="21" height="13" viewBox="0 0 21 13"><path d="M0 13L10.500 0L21 13Z" fill="#6b7580"/></svg>
<svg width="0" height="0" style="left:0;top:0"><defs><radialGradient id="grm" cx=".4" cy=".25" r=".8"><stop offset="0" stop-color="#d0508c"/><stop offset="1" stop-color="#9c1c4e"/></radialGradient></defs></svg>
<svg style="left:2233px;top:835.1px" width="32" height="32" viewBox="0 0 32 32"><path d="M13 3.600L23.200 14.800H16.800V23.100H29.200V29.600H9.400V14.800H3Z" fill="#3fd08a" stroke="#17a862" stroke-width="1.200" stroke-linejoin="round"/></svg>
<span class="t" style="left:2280.2px;top:841px;font-size:23.8px;color:#0a0a9e;letter-spacing:-0.52px;">..</span>
<div class="cb2" style="left:2180px;top:883.9px;width:22px;height:22px"></div>
<svg style="left:2233px;top:881.1px" width="34" height="33" viewBox="0 0 34 33"><path d="M4.900 1.700H21.900L30.700 10V30.900H4.900Z" fill="#fff" stroke="#c2c3c6" stroke-width="1.100" stroke-linejoin="round"/><path d="M30.700 10V30.900H4.900" fill="none" stroke="#8d9098" stroke-width="1.150" stroke-linejoin="round"/><path d="M21.900 1.700V10H30.700Z" fill="#f1f1f2" stroke="#b1b3b7" stroke-width="1.100" stroke-linejoin="round"/><path d="M11.100 6.200L21.400 16.500L11.100 26.800L.8 16.500Z" fill="#f05133"/><path d="M8.300 11L14 16.700M10.900 13.600V21.300" stroke="#fff" stroke-width="1.400"/><circle cx="14.200" cy="17" r="1.700" fill="#fff"/><circle cx="10.900" cy="21.600" r="1.700" fill="#fff"/><circle cx="10.900" cy="13.600" r="1.300" fill="#fff"/></svg>
<span class="t" style="left:2280.2px;top:887px;font-size:23.8px;color:#0a0a9e;letter-spacing:-0.107px;">.gitignore</span>
<span class="t" style="left:2826.0px;top:887px;font-size:23.8px;color:#555;letter-spacing:-0.468px;">63 B</span>
<span class="t" style="left:2985.8px;top:887px;font-size:23.8px;color:#555;letter-spacing:-0.049px;">Oct 8, 2019, 8:41 AM</span>
<div class="cb2" style="left:2180px;top:929.9px;width:22px;height:22px"></div>
<svg style="left:2233px;top:927.1px" width="34" height="33" viewBox="0 0 34 33"><path d="M4.900 1.700H21.900L30.700 10V30.900H4.900Z" fill="#fff" stroke="#c2c3c6" stroke-width="1.100" stroke-linejoin="round"/><path d="M30.700 10V30.900H4.900" fill="none" stroke="#8d9098" stroke-width="1.150" stroke-linejoin="round"/><path d="M21.900 1.700V10H30.700Z" fill="#f1f1f2" stroke="#b1b3b7" stroke-width="1.100" stroke-linejoin="round"/><circle cx="9.400" cy="14.600" r="8.400" fill="#eef1f8" stroke="#8f9bb5" stroke-width="1.200"/><path d="M9.200 9.800V15.200H12.800" fill="none" stroke="#111" stroke-width="1.500"/></svg>
<span class="t" style="left:2280.2px;top:933px;font-size:23.8px;color:#0a0a9e;letter-spacing:-0.273px;">.Rhistory</span>
<span class="t" style="left:2826.0px;top:933px;font-size:23.8px;color:#555;letter-spacing:-0.324px;">7.2 KB</span>
<span class="t" style="left:2985.8px;top:933px;font-size:23.8px;color:#555;letter-spacing:-0.049px;">Oct 8, 2019, 9:10 AM</span>
<div class="cb2" style="left:2180px;top:975.9px;width:22px;height:22px"></div>
<svg style="left:2233px;top:973.1px" width="34" height="33" viewBox="0 0 34 33"><path d="M4.900 1.700H21.900L30.700 10V30.900H4.900Z" fill="#fff" stroke="#c2c3c6" stroke-width="1.100" stroke-linejoin="round"/><path d="M30.700 10V30.900H4.900" fill="none" stroke="#8d9098" stroke-width="1.150" stroke-linejoin="round"/><path d="M21.900 1.700V10H30.700Z" fill="#f1f1f2" stroke="#b1b3b7" stroke-width="1.100" stroke-linejoin="round"/><text x=".8" y="24.500" font-family="Liberation Sans,sans-serif" font-size="12.600" fill="#26267f" stroke="#26267f" stroke-width=".45" letter-spacing="-2.700">T<tspan dy="3.400">E</tspan><tspan dy="-3.400">X</tspan></text></svg>
<span class="t" style="left:2280.2px;top:979px;font-size:23.8px;color:#0a0a9e;letter-spacing:-0.513px;">beamercolorthemeMonashWhite.sty</span>
<span class="t" style="left:2826.0px;top:979px;font-size:23.8px;color:#555;letter-spacing:-0.324px;">1.4 KB</span>
<span class="t" style="left:2985.8px;top:979px;font-size:23.8px;color:#555;letter-spacing:-0.049px;">Oct 8, 2019, 8:41 AM</span>
<div class="cb2" style="left:2180px;top:1021.9px;width:22px;height:22px"></div>
<svg style="left:2234px;top:1023.3px" width="31" height="27.0" viewBox="0 0 31 27"><path d="M13.500 6L17.600 .8H26.400L30.300 5.200V23.600Q30.300 24.600 29.300 24.600H26" fill="#e9ebec" stroke="#c4960f" stroke-width="1.300" stroke-linejoin="round"/><rect x=".7" y="8.200" width="27.200" height="17.800" rx="1.400" fill="url(#gf)" stroke="#c4960f" stroke-width="1.300"/></svg>
<span class="t" style="left:2280.2px;top:1025px;font-size:23.8px;color:#0a0a9e;letter-spacing:-0.175px;">figs</span>
<div class="cb2" style="left:2180px;top:1067.9px;width:22px;height:22px"></div>
<svg style="left:2233px;top:1065.1px" width="34" height="33" viewBox="0 0 34 33"><path d="M4.900 1.700H21.900L30.700 10V30.900H4.900Z" fill="#fff" stroke="#c2c3c6" stroke-width="1.100" stroke-linejoin="round"/><path d="M30.700 10V30.900H4.900" fill="none" stroke="#8d9098" stroke-width="1.150" stroke-linejoin="round"/><path d="M21.900 1.700V10H30.700Z" fill="#f1f1f2" stroke="#b1b3b7" stroke-width="1.100" stroke-linejoin="round"/></svg>
<span class="t" style="left:2280.2px;top:1071px;font-size:23.8px;color:#0a0a9e;letter-spacing:-0.896px;">LICENSE</span>
<span class="t" style="left:2826.0px;top:1071px;font-size:23.8px;color:#555;letter-spacing:-0.241px;">20.4 KB</span>
<span class="t" style="left:2985.8px;top:1071px;font-size:23.8px;color:#555;letter-spacing:-0.049px;">Oct 8, 2019, 8:41 AM</span>
<div class="cb2" style="left:2180px;top:1113.9px;width:22px;height:22px"></div>
<svg style="left:2234.2px;top:1114.1999999999998px" width="30" height="30.6" viewBox="0 0 30.400 31"><path d="M15.200 .7L29.700 6V24L15.200 30.400L.7 24V6Z" fill="#c9edf6" stroke="#55bcd4" stroke-width="1.200" stroke-linejoin="round"/><path d="M.7 6L15.200 11.500L29.700 6M15.200 11.500V30.400" fill="none" stroke="#7fd0e3" stroke-width="1"/><path d="M.7 24L15.200 18.500L29.700 24M15.200 .7V18.500" fill="none" stroke="#8fd6e6" stroke-width=".9"/><text x="9.600" y="21.300" font-family="Liberation Serif,serif" font-size="19" fill="#336cb3" textLength="11.800" lengthAdjust="spacingAndGlyphs">R</text></svg>
<span class="t" style="left:2280.2px;top:1117px;font-size:23.8px;color:#0a0a9e;letter-spacing:0.016px;">Master-Business-analytics.Rproj</span>
<span class="t" style="left:2826.0px;top:1117px;font-size:23.8px;color:#555;letter-spacing:-0.382px;">205 B</span>
<span class="t" style="left:2985.8px;top:1117px;font-size:23.8px;color:#555;letter-spacing:-0.11px;">Oct 11, 2019, 2:13 PM</span>
<div class="cb2" style="left:2180px;top:1159.9px;width:22px;height:22px"></div>
<svg style="left:2233px;top:1157.1px" width="34" height="33" viewBox="0 0 34 33"><path d="M4.900 1.700H21.900L30.700 10V30.900H4.900Z" fill="#fff" stroke="#c2c3c6" stroke-width="1.100" stroke-linejoin="round"/><path d="M30.700 10V30.900H4.900" fill="none" stroke="#8d9098" stroke-width="1.150" stroke-linejoin="round"/><path d="M21.900 1.700V10H30.700Z" fill="#f1f1f2" stroke="#b1b3b7" stroke-width="1.100" stroke-linejoin="round"/></svg>
<span class="t" style="left:2280.2px;top:1163px;font-size:23.8px;color:#0a0a9e;letter-spacing:-0.29px;">menendezp_MBA.log</span>
<span class="t" style="left:2826.0px;top:1163px;font-size:23.8px;color:#555;letter-spacing:-0.241px;">128.7 KB</span>
<span class="t" style="left:2985.8px;top:1163px;font-size:23.8px;color:#555;letter-spacing:-0.049px;">Oct 8, 2019, 9:07 AM</span>
<div class="cb2" style="left:2180px;top:1205.9px;width:22px;height:22px"></div>
<svg style="left:2233px;top:1203.1px" width="34" height="33" viewBox="0 0 34 33"><g transform="translate(2.300 0)"><path d="M4.900 1.700H21.900L30.700 10V30.900H4.900Z" fill="#fff" stroke="#c2c3c6" stroke-width="1.100" stroke-linejoin="round"/><path d="M30.700 10V30.900H4.900" fill="none" stroke="#8d9098" stroke-width="1.150" stroke-linejoin="round"/><path d="M21.900 1.700V10H30.700Z" fill="#f1f1f2" stroke="#b1b3b7" stroke-width="1.100" stroke-linejoin="round"/></g><rect x="1.200" y="5.800" width="18.300" height="7.300" fill="#e8404a" stroke="#c8222d" stroke-width=".8"/><path d="M11.500 27C15 22.500 17.500 18 17.800 14.200M17.800 14.200C18.500 18.500 23 23 28 22.300C30.500 21.800 29.500 20 26.500 20.300C21 20.800 15 23.500 11.500 27ZM11.500 27C10 28.300 11 29 12.500 27.600" fill="none" stroke="#e8404a" stroke-width=".95"/></svg>
<span class="t" style="left:2280.2px;top:1209px;font-size:23.8px;color:#0a0a9e;letter-spacing:-0.232px;">menendezp_MBA.pdf</span>
<span class="t" style="left:2826.0px;top:1209px;font-size:23.8px;color:#555;letter-spacing:-0.33px;">7.4 MB</span>
<span class="t" style="left:2985.8px;top:1209px;font-size:23.8px;color:#555;letter-spacing:-0.049px;">Oct 8, 2019, 9:07 AM</span>
<div class="cb2" style="left:2180px;top:1251.9px;width:22px;height:22px"></div>
<svg style="left:2233px;top:1249.1px" width="34" height="33" viewBox="0 0 34 33"><path d="M4.900 1.700H21.900L30.700 10V30.900H4.900Z" fill="#fff" stroke="#c2c3c6" stroke-width="1.100" stroke-linejoin="round"/><path d="M30.700 10V30.900H4.900" fill="none" stroke="#8d9098" stroke-width="1.150" stroke-linejoin="round"/><path d="M21.900 1.700V10H30.700Z" fill="#f1f1f2" stroke="#b1b3b7" stroke-width="1.100" stroke-linejoin="round"/><circle cx="11.100" cy="15.300" r="10" fill="url(#grm)"/><text x="3.400" y="18.600" font-family="Liberation Sans,sans-serif" font-size="9.500" fill="#fff" stroke="#fff" stroke-width=".25" textLength="15.400" lengthAdjust="spacingAndGlyphs">Rmd</text></svg>
<span class="t" style="left:2280.2px;top:1255px;font-size:23.8px;color:#0a0a9e;letter-spacing:-0.446px;">menendezp_MBA.Rmd</span>
<span class="t" style="left:2826.0px;top:1255px;font-size:23.8px;color:#555;letter-spacing:-0.416px;">11 KB</span>
<span class="t" style="left:2985.8px;top:1255px;font-size:23.8px;color:#555;letter-spacing:-0.049px;">Oct 8, 2019, 9:06 AM</span>
<div class="cb2" style="left:2180px;top:1297.9px;width:22px;height:22px"></div>
<svg style="left:2234px;top:1299.3px" width="31" height="27.0" viewBox="0 0 31 27"><path d="M13.500 6L17.600 .8H26.400L30.300 5.200V23.600Q30.300 24.600 29.300 24.600H26" fill="#e9ebec" stroke="#c4960f" stroke-width="1.300" stroke-linejoin="round"/><rect x=".7" y="8.200" width="27.200" height="17.800" rx="1.400" fill="url(#gf)" stroke="#c4960f" stroke-width="1.300"/></svg>
<span class="t" style="left:2280.2px;top:1301px;font-size:23.8px;color:#0a0a9e;letter-spacing:-0.542px;">menendezp_MBA_cache</span>
<div class="cb2" style="left:2180px;top:1343.9px;width:22px;height:22px"></div>
<svg style="left:2233px;top:1341.1px" width="34" height="33" viewBox="0 0 34 33"><path d="M4.900 1.700H21.900L30.700 10V30.900H4.900Z" fill="#fff" stroke="#c2c3c6" stroke-width="1.100" stroke-linejoin="round"/><path d="M30.700 10V30.900H4.900" fill="none" stroke="#8d9098" stroke-width="1.150" stroke-linejoin="round"/><path d="M21.900 1.700V10H30.700Z" fill="#f1f1f2" stroke="#b1b3b7" stroke-width="1.100" stroke-linejoin="round"/><text x=".8" y="24.500" font-family="Liberation Sans,sans-serif" font-size="12.600" fill="#26267f" stroke="#26267f" stroke-width=".45" letter-spacing="-2.700">T<tspan dy="3.400">E</tspan><tspan dy="-3.400">X</tspan></text></svg>
<span class="t" style="left:2280.2px;top:1347px;font-size:23.8px;color:#0a0a9e;letter-spacing:-0.514px;">MonashWhite.sty</span>
<span class="t" style="left:2826.0px;top:1347px;font-size:23.8px;color:#555;letter-spacing:-0.341px;">3.5 KB</span>
<span class="t" style="left:2985.8px;top:1347px;font-size:23.8px;color:#555;letter-spacing:-0.049px;">Oct 8, 2019, 8:41 AM</span>
<div class="cb2" style="left:2180px;top:1389.9px;width:22px;height:22px"></div>
<svg style="left:2233px;top:1387.1px" width="34" height="33" viewBox="0 0 34 33"><path d="M4.900 1.700H21.900L30.700 10V30.900H4.900Z" fill="#fff" stroke="#c2c3c6" stroke-width="1.100" stroke-linejoin="round"/><path d="M30.700 10V30.900H4.900" fill="none" stroke="#8d9098" stroke-width="1.150" stroke-linejoin="round"/><path d="M21.900 1.700V10H30.700Z" fill="#f1f1f2" stroke="#b1b3b7" stroke-width="1.100" stroke-linejoin="round"/><text x=".8" y="24.500" font-family="Liberation Sans,sans-serif" font-size="12.600" fill="#26267f" stroke="#26267f" stroke-width=".45" letter-spacing="-2.700">T<tspan dy="3.400">E</tspan><tspan dy="-3.400">X</tspan></text></svg>
<span class="t" style="left:2280.2px;top:1393px;font-size:23.8px;color:#0a0a9e;letter-spacing:-0.412px;">preamble.tex</span>
<span class="t" style="left:2826.0px;top:1393px;font-size:23.8px;color:#555;letter-spacing:-0.341px;">1.6 KB</span>
<span class="t" style="left:2985.8px;top:1393px;font-size:23.8px;color:#555;letter-spacing:-0.049px;">Oct 8, 2019, 8:41 AM</span>
<div class="cb2" style="left:2180px;top:1435.9px;width:22px;height:22px"></div>
<svg style="left:2233px;top:1433.1px" width="34" height="33" viewBox="0 0 34 33"><path d="M4.900 1.700H21.900L30.700 10V30.900H4.900Z" fill="#fff" stroke="#c2c3c6" stroke-width="1.100" stroke-linejoin="round"/><path d="M30.700 10V30.900H4.900" fill="none" stroke="#8d9098" stroke-width="1.150" stroke-linejoin="round"/><path d="M21.900 1.700V10H30.700Z" fill="#f1f1f2" stroke="#b1b3b7" stroke-width="1.100" stroke-linejoin="round"/><text x=".2" y="26" font-family="Liberation Sans,sans-serif" font-size="13.800" fill="#8d1d8d" stroke="#8d1d8d" stroke-width=".35" letter-spacing="-.2">MD</text></svg>
<span class="t" style="left:2280.2px;top:1439px;font-size:23.8px;color:#0a0a9e;letter-spacing:-0.699px;">README.md</span>
<span class="t" style="left:2826.0px;top:1439px;font-size:23.8px;color:#555;letter-spacing:-0.463px;">167 B</span>
<span class="t" style="left:2985.8px;top:1439px;font-size:23.8px;color:#555;letter-spacing:-0.049px;">Oct 8, 2019, 8:41 AM</span>
<div style="left:2724px;top:654px;width:14px;height:6px;border-top:2px solid #cfd1d6;border-bottom:2px solid #cfd1d6"></div>
<div style="left:1064px;top:1031px;width:14px;height:6px;border-top:2px solid #cfd1d6;border-bottom:2px solid #cfd1d6"></div>
<div style="left:2150px;top:886px;width:6px;height:14px;border-left:2px solid #cfd1d6;border-right:2px solid #cfd1d6"></div>
</div>
</body></html>
